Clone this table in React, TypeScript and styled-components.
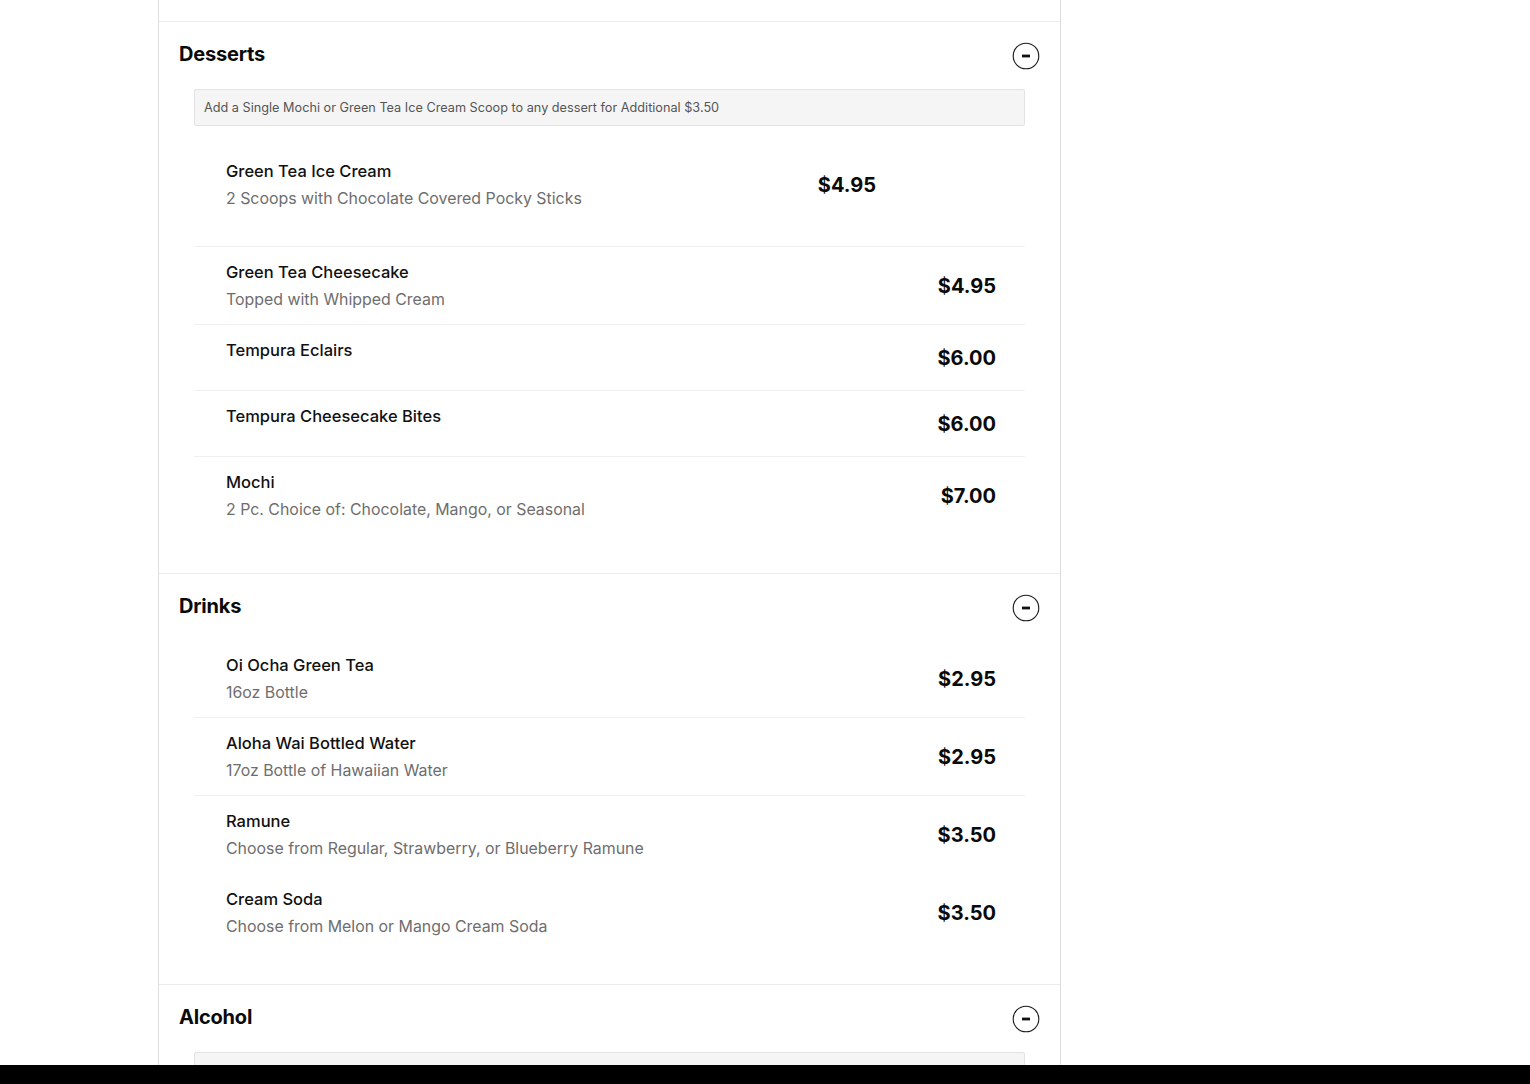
import React from "react";
import styled, { createGlobalStyle } from "styled-components";

const GlobalStyle = createGlobalStyle`
  html, body { margin: 0; padding: 0; background: #ffffff; }
  body {
    font-family: Inter, "Noto Sans", "Liberation Sans", sans-serif;
    color: #111111;
    -webkit-font-smoothing: antialiased;
  }
  * { box-sizing: border-box; }
`;

const Page = styled.div`
  padding-left: 158px;
  min-height: 100vh;
`;

const Column = styled.main`
  width: 903px;
  min-height: 1084px;
  border-left: 1px solid #dedede;
  border-right: 1px solid #dedede;
`;

const TopGap = styled.div`
  height: 21px;
`;

const Section = styled.section<{ $padBottom: number }>`
  border-top: 1px solid #ececec;
  padding-bottom: ${(p) => p.$padBottom}px;
`;

const SectionHeader = styled.header`
  display: flex;
  align-items: flex-start;
  justify-content: space-between;
  padding: 19px 20px 0 20px;
`;

const SectionTitle = styled.h2`
  margin: 0;
  font-size: 20px;
  line-height: 26px;
  font-weight: 700;
  letter-spacing: -0.2px;
  color: #0a0a0a;
`;

const CollapseButton = styled.button`
  width: 28px;
  height: 28px;
  margin-top: 1px;
  margin-bottom: -4px;
  padding: 0;
  border: none;
  background: transparent;
  display: flex;
  align-items: center;
  justify-content: center;
  cursor: pointer;
`;

const List = styled.div<{ $hasNote: boolean }>`
  margin: ${(p) => (p.$hasNote ? 20 : 21)}px 35px 0 35px;
  display: flex;
  flex-direction: column;
`;

const Note = styled.div`
  margin-top: 2px;
  padding: 9px 9px;
  background: #f5f5f5;
  border: 1px solid #e3e3e3;
  border-radius: 2px;
  font-size: 12.7px;
  line-height: 17px;
  color: #555555;
`;

const Row = styled.div<{ $divider: boolean; $tall: boolean }>`
  display: flex;
  align-items: center;
  gap: 16px;
  padding: 13px 29px ${(p) => (p.$tall ? 15 : 12)}px 32px;
  min-height: ${(p) => (p.$tall ? 121 : 0)}px;
  border-bottom: 1px solid ${(p) => (p.$divider ? "#efefef" : "transparent")};
`;

const Info = styled.div<{ $top: boolean }>`
  flex: 1;
  min-height: 40px;
  align-self: ${(p) => (p.$top ? "flex-start" : "center")};
  display: flex;
  flex-direction: column;
  gap: 4px;
`;

const Name = styled.div`
  font-size: 16.5px;
  line-height: 24px;
  font-weight: 500;
  color: #111111;
`;

const Desc = styled.div`
  font-size: 15.9px;
  line-height: 24px;
  font-weight: 400;
  color: #6e6e6e;
`;

const Price = styled.div`
  font-size: 20px;
  line-height: 28px;
  font-weight: 700;
  color: #0a0a0a;
  white-space: nowrap;
`;

const ImageSlot = styled.div`
  width: 104px;
  flex-shrink: 0;
`;

const BottomBar = styled.div`
  position: fixed;
  left: 0;
  right: 0;
  bottom: 0;
  height: 19px;
  background: #000000;
`;

type Item = {
  name: string;
  desc?: string;
  price: string;
  divider: boolean;
  image?: boolean;
};

type Category = {
  title: string;
  note?: string;
  items: Item[];
  padBottom: number;
};

const menu: Category[] = [
  {
    title: "Desserts",
    note: "Add a Single Mochi or Green Tea Ice Cream Scoop to any dessert for Additional $3.50",
    padBottom: 38,
    items: [
      { name: "Green Tea Ice Cream", desc: "2 Scoops with Chocolate Covered Pocky Sticks", price: "$4.95", divider: true, image: true },
      { name: "Green Tea Cheesecake", desc: "Topped with Whipped Cream", price: "$4.95", divider: true },
      { name: "Tempura Eclairs", price: "$6.00", divider: true },
      { name: "Tempura Cheesecake Bites", price: "$6.00", divider: true },
      { name: "Mochi", desc: "2 Pc. Choice of: Chocolate, Mango, or Seasonal", price: "$7.00", divider: false },
    ],
  },
  {
    title: "Drinks",
    padBottom: 32,
    items: [
      { name: "Oi Ocha Green Tea", desc: "16oz Bottle", price: "$2.95", divider: true },
      { name: "Aloha Wai Bottled Water", desc: "17oz Bottle of Hawaiian Water", price: "$2.95", divider: true },
      { name: "Ramune", desc: "Choose from Regular, Strawberry, or Blueberry Ramune", price: "$3.50", divider: false },
      { name: "Cream Soda", desc: "Choose from Melon or Mango Cream Soda", price: "$3.50", divider: false },
    ],
  },
  {
    title: "Alcohol",
    note: " ",
    padBottom: 40,
    items: [],
  },
];

const MinusCircle = () => (
  <svg width="28" height="28" viewBox="0 0 28 28" aria-hidden="true">
    <circle cx="14" cy="14" r="12.8" fill="none" stroke="#1a1a1a" strokeWidth="1.1" />
    <line x1="10" y1="14" x2="18" y2="14" stroke="#111111" strokeWidth="2.8" />
  </svg>
);

export default function App() {
  return (
    <>
      <GlobalStyle />
      <Page>
        <Column>
          <TopGap />
          {menu.map((cat) => (
            <Section key={cat.title} $padBottom={cat.padBottom}>
              <SectionHeader>
                <SectionTitle>{cat.title}</SectionTitle>
                <CollapseButton aria-label={`Collapse ${cat.title}`}>
                  <MinusCircle />
                </CollapseButton>
              </SectionHeader>
              <List $hasNote={cat.note !== undefined}>
                {cat.note !== undefined && <Note>{cat.note}</Note>}
                {cat.items.map((item) => (
                  <Row key={item.name} $divider={item.divider} $tall={!!item.image}>
                    <Info $top={!item.desc}>
                      <Name>{item.name}</Name>
                      {item.desc && <Desc>{item.desc}</Desc>}
                    </Info>
                    <Price>{item.price}</Price>
                    {item.image && <ImageSlot />}
                  </Row>
                ))}
              </List>
            </Section>
          ))}
        </Column>
      </Page>
      <BottomBar />
    </>
  );
}
